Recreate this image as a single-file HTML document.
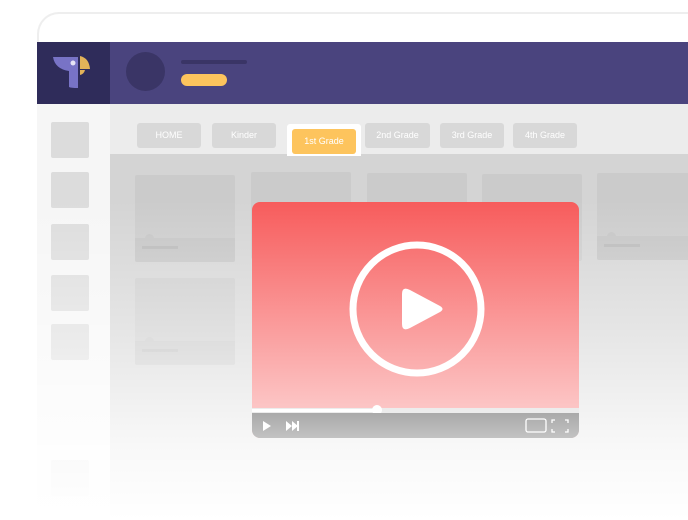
<!DOCTYPE html>
<html><head><style>
*{margin:0;padding:0;box-sizing:border-box}
html,body{width:688px;height:520px;overflow:hidden}
body{background:#fff;position:relative;font-family:"Liberation Sans",sans-serif}
.a{position:absolute}
.frame{left:37px;top:12px;width:651px;height:508px;border:2px solid #eee;border-right:none;border-bottom:none;border-radius:22px 0 0 0;background:#fff;overflow:hidden}
.tab{position:absolute;top:123px;height:25px;background:#d8d8d8;border-radius:3px;color:#fff;font-size:9px;text-align:center;line-height:25px}
.card{position:absolute;width:100px;height:87px;background:#cbcbcb;border-radius:2px;overflow:hidden}
.card .b{position:absolute;left:0;right:0;bottom:0;height:24px;background:#c4c4c4}
.card .l{position:absolute;left:7px;bottom:13px;width:36px;height:3px;background:#b8b8b8}
.card .d{position:absolute;left:10px;bottom:20px;width:9px;height:8px;border-radius:5px 5px 0 0;background:#c4c4c4}
.sq{position:absolute;left:51px;width:38px;height:36px;background:#dcdcdc;border-radius:2px}
</style></head><body>
<div class="a frame"></div>
<div class="a" style="left:37px;top:104px;width:73px;height:416px;background:#f6f6f6"></div>
<div class="a" style="left:110px;top:104px;width:578px;height:50px;background:#ececec"></div>
<div class="a" style="left:110px;top:154px;width:578px;height:366px;background:#d4d4d4"></div>
<div class="sq" style="top:122px"></div><div class="sq" style="top:172px"></div><div class="sq" style="top:224px"></div><div class="sq" style="top:275px"></div><div class="sq" style="top:324px"></div><div class="sq" style="top:460px"></div>
<div class="a" style="left:37px;top:42px;width:73px;height:62px;background:#2f2c5a"></div>
<div class="a" style="left:110px;top:42px;width:578px;height:62px;background:#4a447e"></div>
<svg class="a" style="left:50px;top:54px" width="44" height="36" viewBox="0 0 44 36">
<path d="M3 3 H28 V34 Q21 34 19 33 V17 Q5 15 3 3Z" fill="#7873c6"/>
<circle cx="23" cy="9" r="2.5" fill="#e6e4f5"/>
<path d="M30 2 Q39 4 40 15 H30Z" fill="#e3b359"/>
<path d="M30 16 H35 Q34 20 30 21Z" fill="#e3b359"/>
</svg>
<div class="a" style="left:126px;top:52px;width:39px;height:39px;border-radius:50%;background:#3a3566"></div>
<div class="a" style="left:181px;top:60px;width:66px;height:4px;background:#3a3566;border-radius:2px"></div>
<div class="a" style="left:181px;top:74px;width:46px;height:12px;background:#fdc45d;border-radius:6px"></div>
<div class="tab" style="left:137px;width:64px">HOME</div>
<div class="tab" style="left:212px;width:64px">Kinder</div>
<div class="a" style="left:287px;top:124px;width:74px;height:32px;background:#fff;border-radius:3px 3px 0 0"></div>
<div class="tab" style="left:292px;top:129px;width:64px;background:#fdc45d">1st Grade</div>
<div class="tab" style="left:365px;width:65px">2nd Grade</div>
<div class="tab" style="left:440px;width:64px">3rd Grade</div>
<div class="tab" style="left:513px;width:64px">4th Grade</div>
<div class="card" style="left:135px;top:175px"><div class="b"></div><div class="d"></div><div class="l"></div></div>
<div class="card" style="left:251px;top:172px"></div>
<div class="card" style="left:367px;top:173px"></div>
<div class="card" style="left:482px;top:174px"></div>
<div class="card" style="left:597px;top:173px"><div class="b"></div><div class="d"></div><div class="l"></div></div>
<div class="card" style="left:135px;top:278px"><div class="b"></div><div class="d"></div><div class="l"></div></div>
<div class="a" style="left:37px;top:200px;width:651px;height:320px;background:linear-gradient(rgba(255,255,255,0),rgba(255,255,255,.4) 40%,rgba(255,255,255,.85) 78%,#fff)"></div>
<div class="a" style="left:252px;top:202px;width:327px;height:236px;border-radius:8px;overflow:hidden;background:linear-gradient(#f75c5c,#fcc6c6 88%)">
<div class="a" style="left:0;top:206px;width:327px;height:5px;background:#ececec"></div>
<div class="a" style="left:0;top:207px;width:125px;height:3px;background:#fff"></div>
<div class="a" style="left:120px;top:203px;width:10px;height:10px;border-radius:50%;background:#fff"></div>
<div class="a" style="left:0;top:211px;width:327px;height:25px;background:linear-gradient(#a9a9a9,#c2c2c2)"></div>
</div>
<svg class="a" style="left:252px;top:202px" width="327" height="236">
<circle cx="165" cy="107" r="64" fill="none" stroke="#fff" stroke-width="7"/>
<path d="M150 92 Q150 84 158 88 L188 104 Q193 107 188 110 L158 126 Q150 130 150 122Z" fill="#fff"/>
<path d="M11 219 L19 224 L11 229Z" fill="#fff"/>
<path d="M34 219 L40 224 L34 229Z M40 219 L46 224 L40 229Z" fill="#fff"/><rect x="45" y="219" width="2" height="10" fill="#fff"/>
<rect x="274" y="217" width="20" height="13" rx="2" fill="none" stroke="#fff" stroke-width="1.3"/>
<path d="M300 221V218H303 M313 218H316V221 M316 227V230H313 M303 230H300V227" fill="none" stroke="#fff" stroke-width="1.3"/>
</svg>
</body></html>
